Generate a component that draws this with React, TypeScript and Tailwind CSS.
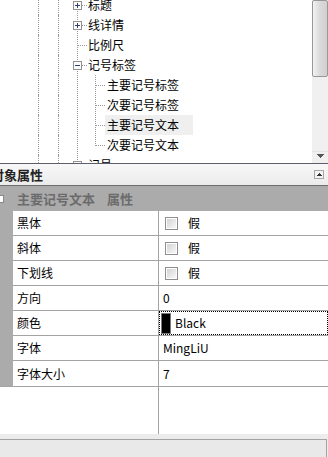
import React from 'react';

type Box = 'plus' | 'minus' | undefined;

// tree connector for a level-2 node: vertical guide, horizontal dots, optional expander box
function Branch({ down, box, width = 16 }: { down: boolean; box?: Box; width?: number }) {
  return (
    <svg width={width} height="20" className="shrink-0" shapeRendering="crispEdges">
      <line x1="5.5" y1="0" x2="5.5" y2={down ? 20 : 11} stroke="#9a9a9a" strokeDasharray="1 1" />
      <line x1="6" y1="10.5" x2="15" y2="10.5" stroke="#9a9a9a" strokeDasharray="1 1" />
      {box && (
        <>
          <rect x="1.5" y="6.5" width="8" height="8" fill="#fbfbfb" stroke="#929292" />
          <line x1="3" y1="10.5" x2="8" y2="10.5" stroke="#2f3f78" />
          {box === 'plus' && <line x1="5.5" y1="8" x2="5.5" y2="13" stroke="#2f3f78" />}
        </>
      )}
    </svg>
  );
}

function Pass() {
  return (
    <svg width="18" height="20" className="shrink-0" shapeRendering="crispEdges">
      <line x1="5.5" y1="0" x2="5.5" y2="20" stroke="#9a9a9a" strokeDasharray="1 1" />
    </svg>
  );
}

function Guides() {
  return (
    <>
      <div className="w-[38px] shrink-0" />
      <div className="w-[20px] shrink-0 border-l border-dotted border-[#9a9a9a]" />
      <div className="w-[14px] shrink-0 border-l border-dotted border-[#9a9a9a]" />
    </>
  );
}

const nodes: { label: string; level: 2 | 3; box?: Box; down?: boolean; selected?: boolean }[] = [
  { label: '标题', level: 2, box: 'plus', down: true },
  { label: '线详情', level: 2, box: 'plus', down: true },
  { label: '比例尺', level: 2, down: true },
  { label: '记号标签', level: 2, box: 'minus', down: true },
  { label: '主要记号标签', level: 3, down: true },
  { label: '次要记号标签', level: 3, down: true },
  { label: '主要记号文本', level: 3, down: true, selected: true },
  { label: '次要记号文本', level: 3, down: false },
  { label: '记号', level: 2, box: 'plus', down: true },
];

function Checkbox() {
  return (
    <span className="w-[13px] h-[13px] border border-[#8e8e8e] bg-white p-[1px] shrink-0">
      <span className="block w-full h-full bg-linear-to-br from-[#d4d4d4] to-[#f7f7f7]" />
    </span>
  );
}

const props: { name: string; value: React.ReactNode; focused?: boolean }[] = [
  { name: '黑体', value: <span className="flex items-center gap-[10px] pl-[2px]"><Checkbox />假</span> },
  { name: '斜体', value: <span className="flex items-center gap-[10px] pl-[2px]"><Checkbox />假</span> },
  { name: '下划线', value: <span className="flex items-center gap-[10px] pl-[2px]"><Checkbox />假</span> },
  { name: '方向', value: '0' },
  {
    name: '颜色',
    focused: true,
    value: (
      <span className="flex items-center gap-[4px] -ml-[2px]">
        <span className="w-[10px] h-[21px] bg-black border border-[#7a7a7a]" />
        Black
      </span>
    ),
  },
  { name: '字体', value: 'MingLiU' },
  { name: '字体大小', value: '7' },
];

export default function App() {
  return (
    <div className="w-[328px] h-[457px] overflow-hidden bg-white text-[12px] text-black font-['Noto_Sans_CJK_SC','Noto_Sans',sans-serif] flex flex-col">
      {/* tree view */}
      <div className="h-[164px] shrink-0 flex border-b border-[#5d5f6e]">
        <div className="flex-1 overflow-hidden">
          <div className="-mt-[5px]">
            {nodes.map((n) => (
              <div key={n.label} className="flex h-[20px] items-stretch">
                <Guides />
                {n.level === 2 ? (
                  <Branch down={!!n.down} box={n.box} />
                ) : (
                  <>
                    <Pass />
                    <Branch down={!!n.down} width={17} />
                  </>
                )}
                <span
                  className={
                    'leading-[20px] whitespace-nowrap ' +
                    (n.selected ? '-ml-[2px] pl-[2px] pr-[14px] bg-[#efefef]' : '')
                  }
                >
                  {n.label}
                </span>
              </div>
            ))}
          </div>
        </div>
        <div className="w-[16px] shrink-0 bg-[#f0f0f0] flex flex-col">
          <div className="h-[77px] border border-[#979797] rounded-[2px] bg-linear-to-r from-[#f3f3f3] via-[#dadada] to-[#d0d0d0]" />
          <div className="flex-1" />
          <div className="h-[12px] flex justify-center pt-[2px] border-t border-[#e4e4e4]">
            <svg width="7" height="4" shapeRendering="crispEdges">
              <polygon points="0,0 7,0 3.5,4" fill="#555" />
            </svg>
          </div>
        </div>
      </div>

      {/* panel header */}
      <div className="h-[22px] shrink-0 flex items-center border-b border-[#6e6e6e] bg-linear-to-b from-[#f8f8f8] to-[#ebebeb]">
        <span className="-ml-[9px] font-bold text-[13px] leading-[20px] text-[#222]">对象属性</span>
        <div className="flex-1" />
        <div className="w-[10px] h-[9px] mr-[4px] border border-[#a8a8a8] bg-[#f4f4f4] flex items-center justify-center">
          <svg width="5" height="3" shapeRendering="crispEdges">
            <polygon points="0,3 5,3 2.5,0" fill="#333" />
          </svg>
        </div>
      </div>

      {/* category */}
      <div className="h-[25px] shrink-0 flex items-center bg-[#ababab]">
        <span className="-ml-[4px] w-[8px] h-[8px] bg-white border border-[#8a8a8a]" />
        <span className="ml-[13px] font-bold text-[13px] text-[#6b6b6b] leading-[20px]">主要记号文本</span>
        <span className="ml-[12px] font-bold text-[13px] text-[#6b6b6b] leading-[20px]">属性</span>
      </div>

      {/* property grid */}
      <div className="shrink-0 flex border-b border-[#a3a3a3]">
        <div className="w-[13px] shrink-0 bg-[#ababab]" />
        <div className="flex-1">
          {props.map((p, i) => (
            <div
              key={p.name}
              className={'h-[25px] flex ' + (i < props.length - 1 ? 'border-b border-[#a3a3a3]' : 'h-[24px]')}
            >
              <div className="w-[146px] shrink-0 border-r border-[#a3a3a3] pl-[4px] flex items-center leading-[20px]">
                {p.name}
              </div>
              <div
                className={
                  'flex-1 flex items-center leading-[20px] ' +
                  (p.focused ? 'border border-dotted border-black pl-[3px]' : 'pl-[4px]')
                }
              >
                {p.value}
              </div>
            </div>
          ))}
        </div>
      </div>

      <div className="h-[47px] shrink-0 flex">
        <div className="w-[159px] border-r border-[#a3a3a3]" />
      </div>

      {/* description area */}
      <div className="flex-1 bg-[#ececec] pt-[5px] flex">
        <div className="flex-1 mr-[1px] border-t border-r border-[#a3a3a3] bg-[#e9e9e9]" />
      </div>
    </div>
  );
}
